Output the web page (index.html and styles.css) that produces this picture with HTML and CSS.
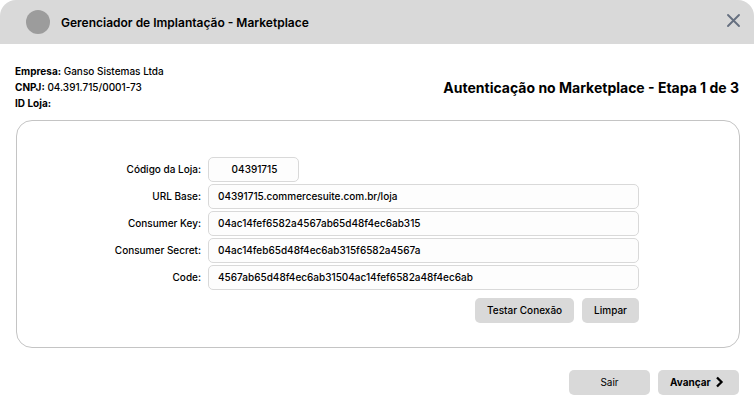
FILE: index.html
```html
<!DOCTYPE html>
<html lang="pt-BR">
<head>
<meta charset="utf-8">
<meta name="viewport" content="width=device-width, initial-scale=1">
<title>Gerenciador de Implantação - Marketplace</title>
<link rel="stylesheet" href="styles.css">
</head>
<body>
<header class="titlebar">
  <span class="logo"></span>
  <h1 class="app-title">Gerenciador de Implantação - Marketplace</h1>
  <button class="close" type="button" aria-label="Fechar">
    <svg width="15" height="15" viewBox="0 0 15 15" fill="none" stroke="#667080" stroke-width="1.9" stroke-linecap="round"><path d="M2 2 13 13M13 2 2 13"/></svg>
  </button>
</header>
<main class="content">
  <div class="summary">
    <div class="company">
      <div><b>Empresa:</b> Ganso Sistemas Ltda</div>
      <div><b>CNPJ:</b> 04.391.715/0001-73</div>
      <div><b>ID Loja:</b></div>
    </div>
    <h2 class="step">Autenticação no Marketplace - Etapa 1 de 3</h2>
  </div>
  <form class="card" id="auth">
    <label for="loja">Código da Loja:</label>
    <input class="short" id="loja" type="text" value="04391715">
    <label for="url">URL Base:</label>
    <input id="url" type="text" value="04391715.commercesuite.com.br/loja">
    <label for="key">Consumer Key:</label>
    <input id="key" type="text" value="04ac14fef6582a4567ab65d48f4ec6ab315">
    <label for="secret">Consumer Secret:</label>
    <input id="secret" type="text" value="04ac14feb65d48f4ec6ab315f6582a4567a">
    <label for="code">Code:</label>
    <input id="code" type="text" value="4567ab65d48f4ec6ab31504ac14fef6582a48f4ec6ab">
    <div class="actions">
      <button class="btn" type="button">Testar Conexão</button>
      <button class="btn" type="reset">Limpar</button>
    </div>
  </form>
  <footer class="footer">
    <button class="btn nav exit" type="button">Sair</button>
    <button class="btn nav next" type="submit" form="auth">Avançar
      <svg width="8" height="12" viewBox="0 0 8 12" fill="none" stroke="#000" stroke-width="2.3"><path d="M1 1.5 5.5 6 1 10.5"/></svg>
    </button>
  </footer>
</main>
</body>
</html>
```
FILE: styles.css
```css
* {
  box-sizing: border-box;
}

body {
  margin: 0;
  background: #fff;
  color: #000;
  font: 500 10px/16px Inter, sans-serif;
}

h1,
h2 {
  margin: 0;
}

button,
input {
  font: inherit;
  color: inherit;
}

.titlebar {
  display: flex;
  align-items: center;
  gap: 11px;
  height: 44px;
  padding: 0 13px 0 26px;
  background: #d9d9d9;
  border-radius: 16px 16px 0 0;
}

.logo {
  width: 24px;
  height: 24px;
  border-radius: 50%;
  background: #9c9c9c;
}

.app-title {
  padding-top: 1px;
  font-size: 12px;
  font-weight: 600;
}

.close {
  display: flex;
  margin: 0 0 3px auto;
  padding: 0;
  border: 0;
  background: none;
}

.content {
  padding: 19px 15px;
}

.summary {
  display: flex;
  align-items: center;
  justify-content: space-between;
  margin-bottom: 9px;
}

.step {
  padding-top: 2px;
  font-size: 14px;
  font-weight: 700;
}

.card {
  display: grid;
  grid-template-columns: 100px 1fr;
  align-items: center;
  gap: 2px 7px;
  margin: 0 -1px 0 1px;
  padding: 36px 100px 24px 84px;
  border: 1px solid #c4c4c4;
  border-radius: 16px;
}

.card label {
  padding-bottom: 2px;
  text-align: right;
}

.card input {
  width: 100%;
  height: 25px;
  padding: 0 9px 2px;
  border: 1px solid #d9d9d9;
  border-radius: 5px;
  background: #fdfdfd;
}

.card .short {
  width: 91px;
  padding-left: 11px;
  text-align: center;
}

.actions {
  grid-column: 2;
  display: flex;
  justify-content: flex-end;
  gap: 8px;
  margin-top: 6px;
}

.btn {
  height: 25px;
  padding: 0 12px 2px;
  border: 0;
  border-radius: 5px;
  background: #d9d9d9;
}

.footer {
  display: flex;
  justify-content: flex-end;
  gap: 8px;
  margin-top: 22px;
}

.nav {
  width: 81px;
}

.exit {
  font-weight: 400;
}

.next {
  display: flex;
  align-items: center;
  gap: 5px;
  font-weight: 700;
}
```
